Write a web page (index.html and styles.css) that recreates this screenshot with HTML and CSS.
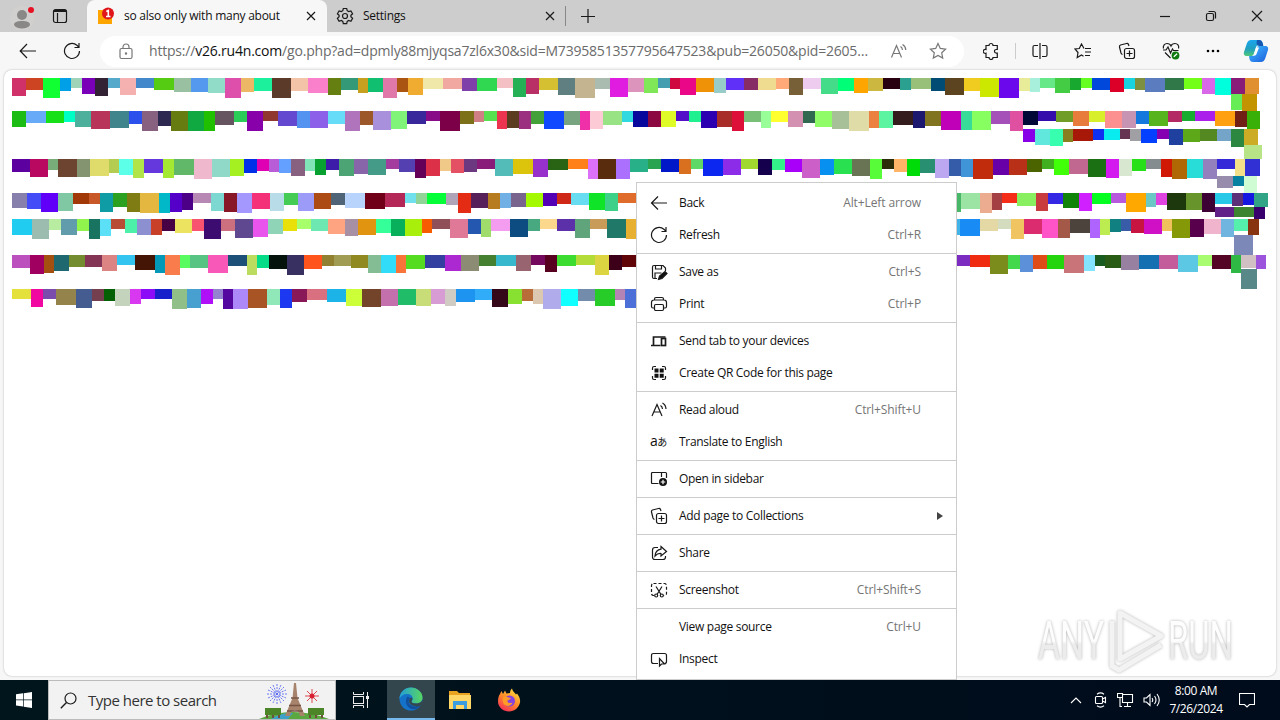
FILE: index.html
```html
<!DOCTYPE html>
<html lang="en">
<head>
  <meta charset="UTF-8">
  <meta name="viewport" content="width=device-width, initial-scale=1.0">
  <title>so also only with many about</title>
  <link rel="stylesheet" href="styles.css">
</head>
<body>
  <header class="tab-strip">
    <svg class="profile" width="26" height="28" viewBox="0 0 26 28">
      <circle cx="13" cy="16" r="12" fill="#d2d0ce"/>
      <circle cx="13" cy="13" r="5" fill="#8a8886"/>
      <path d="M5 23c0-3 3-4 8-4s8 1 8 4c-1 2-4 3.500-8 3.500S6 25 5 23z" fill="#8a8886"/>
      <circle cx="22" cy="8" r="3" fill="#e81123"/>
    </svg>
    <svg class="workspaces icon" width="16" height="16" viewBox="0 0 16 16"><rect x="1.500" y="1.500" width="13" height="13" rx="2"/><path d="M1.500 3.500h13M2 2.500h12M5.500 5v9.500"/></svg>
    <div class="tab active">
      <svg class="favicon" width="18" height="18" viewBox="0 0 18 18">
        <path d="M1 3h14v14H1z" fill="#ffa500"/>
        <circle cx="11" cy="6.500" r="6" fill="#e0161b"/>
        <path d="M9.300 4.500l2-1v6M9 9.500h4.500" fill="none" stroke="#fff" stroke-width="1.600"/>
      </svg>
      <span class="tab-title">so also only with many about</span>
      <svg class="icon" width="10" height="10" viewBox="0 0 10 10"><path d="M1 1l8 8M9 1l-8 8"/></svg>
    </div>
    <div class="tab">
      <svg class="icon gear" width="18" height="18" viewBox="0 0 18 18"><path d="M7.300 1.500h3.400l.5 2.200 1.500.9 2.200-.7 1.700 2.900-1.700 1.500v1.500l1.700 1.500-1.700 2.900-2.200-.7-1.500.9-.5 2.200H7.300l-.5-2.200-1.500-.9-2.200.7-1.700-2.900 1.700-1.500V8.300L1.400 6.800l1.700-2.900 2.200.7 1.500-.9z"/><circle cx="9" cy="9" r="2.500"/></svg>
      <span class="tab-title">Settings</span>
      <svg class="icon" width="10" height="10" viewBox="0 0 10 10"><path d="M1 1l8 8M9 1l-8 8"/></svg>
    </div>
    <svg class="new-tab icon" width="14" height="14" viewBox="0 0 14 14"><path d="M7 0v14M0 7.500h14"/></svg>
    <div class="window-buttons">
      <svg class="icon" width="12" height="12" viewBox="0 0 12 12"><path d="M1 6.500h10"/></svg>
      <svg class="icon" width="12" height="12" viewBox="0 0 12 12"><rect x="1.500" y="3.500" width="7" height="7" rx="1.500"/><path d="M3.500 1.500h5q2 0 2 2v5"/></svg>
      <svg class="icon" width="12" height="12" viewBox="0 0 12 12"><path d="M1 1l10 10M11 1L1 11"/></svg>
    </div>
  </header>

  <nav class="toolbar">
    <svg class="icon" width="18" height="16" viewBox="0 0 18 16"><path d="M17 8H1.500M8 1L1.200 8 8 15"/></svg>
    <svg class="icon reload" width="18" height="18" viewBox="0 0 18 18"><path d="M16.500 9a7.500 7.500 0 1 1-2.600-5.700L16 5.200M16 1v4.500h-4.500"/></svg>
    <div class="address-bar">
      <svg class="icon gray" width="14" height="17" viewBox="0 0 14 17"><rect x="1" y="5.500" width="12" height="10" rx="1.500"/><path d="M4 5.500V4a3 3 0 0 1 6 0v1.500"/><circle cx="7" cy="10.500" r=".6"/></svg>
      <span class="url">https://<b>v26.ru4n.com</b>/go.php?ad=dpmly88mjyqsa7zl6x30&amp;sid=M7395851357795647523&amp;pub=26050&amp;pid=2605…</span>
      <svg class="icon gray read" width="18" height="16" viewBox="0 0 18 16"><path d="M1.500 14.500L6.500 2.500l5 12M3.300 10.500h6.400M10.500 3.500q1.800 1 2 3.500M12.500 1.500q3.200 1.800 3.300 5.500"/></svg>
      <svg class="icon gray" width="18" height="18" viewBox="0 0 18 18"><path d="M9 1.500l2.300 4.900 5.300.7-3.900 3.700 1 5.300L9 13.500l-4.700 2.600 1-5.300L1.400 7.100l5.300-.7z"/></svg>
    </div>
    <div class="actions">
      <svg class="icon" width="16" height="18" viewBox="0 0 16 18"><path d="M3 3.500h3a2 2 0 1 1 4 0h4.300v4h-1a1.800 1.800 0 1 0 0 3.700h1v4.300H10a2 2 0 0 1-4 0H3v-4.300a2 2 0 1 1 0-3.700z"/></svg>
      <i class="divider"></i>
      <svg class="icon" width="16" height="16" viewBox="0 0 16 16"><path d="M8 0v16M6 2.500H2.500q-1.500 0-1.500 1.500v8q0 1.500 1.500 1.500H6M10 2.500h3.500q1.500 0 1.500 1.500v8q0 1.500-1.500 1.500H10"/></svg>
      <svg class="icon" width="18" height="16" viewBox="0 0 18 16"><path d="M10 5.500L7.500 1 5.300 5.500 1 6l3 3.500-.8 5L7.500 12l2 1.200M11 5.500h6M11 9h6M11 12.500h5"/></svg>
      <svg class="icon" width="18" height="18" viewBox="0 0 18 18"><use href="#collections"/></svg>
      <svg class="icon" width="18" height="18" viewBox="0 0 18 18"><path d="M1.500 6.500C.5 3.500 3 1.500 5 1.500c2 0 3.500 1.300 4 2.500.5-1.200 2-2.500 4-2.500 2.300 0 4.500 2 3.500 5M1 8h3l2-3 2.500 6L10.500 7l1 1.500h5M3 10.500l5.500 5.500"/><circle cx="13.500" cy="13.500" r="3.900" fill="#107c10" stroke="none"/><path d="M11.800 14.800l3.300-3" stroke="#fff"/></svg>
      <svg width="14" height="4" viewBox="0 0 14 4"><circle cx="2" cy="2" r="1.300"/><circle cx="7" cy="2" r="1.300"/><circle cx="12" cy="2" r="1.300"/></svg>
      <svg class="copilot" width="26" height="24" viewBox="0 0 26 24">
        <defs>
          <linearGradient id="cp1" x1="0" y1="0" x2="0" y2="1"><stop offset="0" stop-color="#1aa6ee"/><stop offset=".55" stop-color="#1f9fc0"/><stop offset="1" stop-color="#4fc878"/></linearGradient>
          <linearGradient id="cp2" x1="0" y1="0" x2="1" y2="1"><stop offset="0" stop-color="#2fc4f4"/><stop offset=".5" stop-color="#2f8cf0"/><stop offset="1" stop-color="#1a5cd8"/></linearGradient>
        </defs>
        <path d="M8 1h8c2 0 3 1 3.600 3l.6 2h-4c-2 0-3 1-3.500 3l-2 6c-.5 1.500-1.500 2-3 2H4c-3 0-3.500-2-3-4l3-9C5 2 6 1 8 1z" fill="url(#cp1)"/>
        <path d="M14 1h2c2 0 3 1 3.600 3l.8 3h-4c-2 0-2.400-1-2.900-3z" fill="#1558b4"/>
        <path d="M18 23h-8c-2 0-3-1-3.500-3L6 17h2.500c2 0 3-1 3.500-3l2-5c.5-2 1.500-2 3-2h5c3 0 3.500 2 3 4l-3 9c-1 2-2 3-4 3z" fill="url(#cp2)"/>
        <path d="M13 8.500h3l-2.500 6.500c-.5 1.300-1 1.700-2.500 1.700H9.500c1-.5 1.500-1.200 2-2.700z" fill="#fff"/>
      </svg>
    </div>
  </nav>

  <main class="page" id="page"></main>

  <svg class="watermark" width="210" height="72" viewBox="0 0 210 72">
    <defs><linearGradient id="wm" x1="0" y1="0" x2="0" y2="1"><stop offset=".5" stop-color="#fdfdfd"/><stop offset=".55" stop-color="#ececec"/></linearGradient></defs>
    <g fill="url(#wm)">
      <text x="6" y="55" textLength="66" lengthAdjust="spacingAndGlyphs">ANY</text>
      <text x="136" y="55" textLength="65" lengthAdjust="spacingAndGlyphs">RUN</text>
    </g>
    <path d="M88 9v46l41-23zM80 17v45l7 4 42-25" fill="none" stroke="#f3f3f3" stroke-width="5" stroke-linejoin="round"/>
  </svg>

  <div class="context-menu">
    <div class="item"><svg class="icon" width="18" height="18" viewBox="0 0 18 18"><path d="M17 9H2M8 2.500L1.500 9 8 15.500"/></svg><span>Back</span><kbd>Alt+Left arrow</kbd></div>
    <div class="item"><svg class="icon" width="18" height="18" viewBox="0 0 18 18"><path d="M16.500 9a7.500 7.500 0 1 1-2.600-5.700L16 5.200M16 1v4.500h-4.500"/></svg><span>Refresh</span><kbd>Ctrl+R</kbd></div>
    <hr>
    <div class="item"><svg class="icon" width="18" height="18" viewBox="0 0 18 18"><path d="M7 15.500H4q-1.500 0-1.500-1.500V4Q2.500 2.500 4 2.500h9L15.500 5v3M5.500 2.500v3.500h6V2.500M5 15V10h6.500"/><path d="M8.500 16.500l1-3.500 5.500-4.500 2 2-5 5z" fill="#111"/></svg><span>Save as</span><kbd>Ctrl+S</kbd></div>
    <div class="item"><svg class="icon" width="18" height="18" viewBox="0 0 18 18"><path d="M4.500 13H3q-1.500 0-1.500-1.500V7.500Q1.500 5 4 5h10q2.500 0 2.500 2.500v4q0 1.500-1.500 1.500h-1.500M4.500 5V4q0-1.500 1.500-1.500h6q1.500 0 1.500 1.500v1"/><rect x="4.500" y="9.500" width="9" height="6" rx="1.200"/></svg><span>Print</span><kbd>Ctrl+P</kbd></div>
    <hr>
    <div class="item"><svg class="icon bold" width="18" height="18" viewBox="0 0 18 18"><path d="M3.500 13V5h12M1 13.500h9.500"/><rect x="11.500" y="6.500" width="4" height="7"/></svg><span>Send tab to your devices</span></div>
    <div class="item"><svg class="icon" width="18" height="18" viewBox="0 0 18 18"><path d="M2.500 6V4q0-1.500 1.500-1.500h2M12 2.500h2q1.500 0 1.500 1.500v2M15.500 12v2q0 1.500-1.500 1.500h-2M6 15.500H4q-1.500 0-1.500-1.500v-2"/><path d="M4.500 4.500h4v4h-4zM9.700 4.500h4v4h-4zM4.500 9.700h4v4h-4zM9.700 9.700h4v4h-4z" fill="#111" stroke="none"/></svg><span>Create QR Code for this page</span></div>
    <hr>
    <div class="item"><svg class="icon" width="18" height="18" viewBox="0 0 18 18"><path d="M2 15L7 3.500 12 15M3.800 11h6.500M10.500 4.500q1.800 1 2 3.500M12.500 2q3.300 1.800 3.500 6"/></svg><span>Read aloud</span><kbd>Ctrl+Shift+U</kbd></div>
    <div class="item"><span class="glyph">a<small>あ</small></span><span>Translate to English</span></div>
    <hr>
    <div class="item"><svg class="icon" width="18" height="18" viewBox="0 0 18 18"><path d="M8.500 13.500h-6q-1 0-1-1v-9q0-1 1-1h13q1 0 1 1V8M11.500 3v4"/><circle cx="13" cy="12" r="4" fill="#111" stroke="none"/><path d="M13 9.700v4.600M10.700 12h4.600" stroke="#fff"/></svg><span>Open in sidebar</span></div>
    <hr>
    <div class="item"><svg class="icon" width="18" height="18" viewBox="0 0 18 18"><g id="collections"><rect x="6.500" y="6.500" width="10" height="10" rx="2"/><path d="M11.500 8.500v6M8.500 11.500h6M4.500 12.500Q3.300 12 3 11L1.500 5Q1.200 3.500 2.500 3l6-1.500q1.500-.3 2 1l.5 1.500"/></g></svg><span>Add page to Collections</span><i class="arrow"></i></div>
    <hr>
    <div class="item"><svg class="icon" width="18" height="18" viewBox="0 0 18 18"><path d="M8 3.500H5Q2.500 3.500 2.500 6v7q0 2.500 2.500 2.500h8q2.500 0 2.500-2.500v-1"/><path d="M11 2.500l5.500 5-5.500 4.500V9.500q-3.500-.3-6 2.500Q5.500 6 11 5.200z"/></svg><span>Share</span></div>
    <hr>
    <div class="item"><svg class="icon" width="18" height="18" viewBox="0 0 18 18"><rect x="1.500" y="2.500" width="15" height="12" rx="2" stroke-dasharray="3 2"/><path d="M4.500 11h9v6h-9z" fill="#fff" stroke="none"/><path d="M6 5.500l5 8M12 5.500l-5 8"/><circle cx="6.200" cy="14.500" r="1.500"/><circle cx="11.800" cy="14.500" r="1.500"/></svg><span>Screenshot</span><kbd>Ctrl+Shift+S</kbd></div>
    <hr>
    <div class="item"><i class="blank"></i><span>View page source</span><kbd>Ctrl+U</kbd></div>
    <div class="item"><svg class="icon" width="18" height="18" viewBox="0 0 18 18"><path d="M8 13.500H3.500q-2 0-2-2V5.500q0-2 2-2h11q2 0 2 2v6q0 2-2 2"/><path d="M9.500 8.500v7.500l2-2h3z"/></svg><span>Inspect</span></div>
  </div>

  <footer class="taskbar">
    <div class="start"><svg width="16" height="16" viewBox="0 0 16 16" fill="#fff"><path d="M0 2.300L7 1.300V7.600H0zM7.700 1.200L16 0v7.600H7.700zM0 8.300h7v6.300l-7-1zM7.700 8.300H16V16l-8.300-1.200z"/></svg></div>
    <div class="search">
      <svg class="icon" width="17" height="17" viewBox="0 0 17 17"><circle cx="10.500" cy="6.500" r="5.500"/><path d="M6.500 10.500L.8 16.300" stroke-width="1.400"/></svg>
      <span>Type here to search</span>
      <svg class="paris" width="80" height="38" viewBox="0 0 80 38">
        <g stroke="#5c6cf0" stroke-width=".9"><path d="M22 3v20M12 13h20M15 6l14 14M29 6L15 20M18 4l8 18M26 4l-8 18M13 9l18 8M13 17l18-8" stroke-dasharray="2 1"/></g>
        <path d="M57 8v14M50 15h14M52 10l10 10M62 10L52 20" stroke="#e04850" stroke-width="1"/><circle cx="57" cy="15" r="2.500" fill="#d82030"/>
        <path d="M4 38Q20 31 38 31t36 7z" fill="#5ca840"/><path d="M16 38q10-7 22-6l-5 6z" fill="#3fa0c8"/>
        <path d="M10 27h16v7H10zM53 27h16v7H53z" fill="#4c8428"/><path d="M12 34v3M18 34v3M24 34v3M55 34v3M61 34v3M67 34v3" stroke="#70503c" stroke-width="2"/>
        <path d="M39 2h2l1.500 15L50 35h-5q-1-6-5-6t-5 6h-5l7.500-18z" fill="#a8836c"/><path d="M34 24.500h12M36 17h8M32 30h16" stroke="#765444" stroke-width="1.300"/>
      </svg>
    </div>
    <div class="app task-view"><svg width="18" height="16" viewBox="0 0 18 16" fill="none" stroke="#eee"><path d="M1.500 0v2.500h10V0M1.500 16v-2.500h10V16M15.500 0v16"/><rect x="1.500" y="4.500" width="10" height="7"/><path d="M14 5.500h3" stroke-width="3"/></svg></div>
    <div class="app current"><svg width="24" height="24" viewBox="0 0 24 24">
      <defs><linearGradient id="eg" x1="0" y1="0" x2="1" y2="0"><stop offset="0" stop-color="#229ed8"/><stop offset="1" stop-color="#58d660"/></linearGradient></defs>
      <circle cx="12" cy="12" r="11.500" fill="#1473c8"/>
      <path d="M.5 12C.5 5 6 .5 12 .5S23.500 5 23.500 10.500c0 4-3 6-6.500 6-3 0-4.500-1-4.500-2 0-.8 1.200-1 1.200-3C13.700 9 11.500 7 8 7S1.500 9 .5 12z" fill="url(#eg)"/>
      <path d="M8.500 9.500c-3 4-1.500 9.500 3 12 3 1.500 7.500.5 9.800-3-6 2.500-12 0-11.600-4.500 0-1.500.8-2.500 1.500-3z" fill="#124f9c"/>
      <path d="M12.500 14.500c0 1 1.500 2 4.500 2 3 0 5.500-1.200 6.300-3.500l.2 4-2.500 2C16 20.500 10 18 10 14c0-1.500.8-3 2.500-3.500 2 1.500 0 3 0 4z" fill="#344850"/>
    </svg></div>
    <div class="app"><svg width="22" height="20" viewBox="0 0 22 20"><path d="M0 1h8l2 2h11v4H0z" fill="#e8a420"/><path d="M0 5h22v14H0z" fill="#ffd766"/><path d="M4 19v-8h14v8h-3v-4H7v4z" fill="#3c9ce0"/></svg></div>
    <div class="app"><svg width="24" height="24" viewBox="0 0 24 24">
      <defs><linearGradient id="fx" x1=".8" y1="0" x2=".2" y2="1"><stop offset="0" stop-color="#ffe040"/><stop offset=".5" stop-color="#ff8a28"/><stop offset="1" stop-color="#f4285c"/></linearGradient></defs>
      <path d="M3 6l1.500-3L6 6l2-3.500 1.500 3L13 5c0-2 1-4 2-4.500.5 3 3 4 4 6l1-1c2.500 3 3.500 6 3 9-1 5-5.500 9-11 9S1 19.500 1 13.500C1 10.500 1.500 8 3 6z" fill="url(#fx)"/>
      <circle cx="12.500" cy="13" r="5.500" fill="#8442e0"/><path d="M6 9c2-1 4-.5 5 .5 2 0 3 .5 2.500 1.500l-3 1.500c-.5 2 2 3.500 5 2-1 3-4 4-6.500 3C6 16.500 5 12.500 6 9z" fill="#ff9c28"/>
    </svg></div>
    <div class="tray">
      <svg width="12" height="8" viewBox="0 0 12 8"><path d="M1 7l5-5 5 5"/></svg>
      <svg width="14" height="16" viewBox="0 0 14 16"><rect x="1.500" y="4.500" width="7" height="7" rx="1"/><path d="M8.500 7l3-1.500v5L8.500 9M3 2.200Q6.500-.5 10 2.200M3 13.800q3.500 2.700 7 0"/></svg>
      <svg width="17" height="16" viewBox="0 0 17 16"><path d="M5.500 2.500h10v8h-10zM7 14.500h7M10.500 11v3M.5 1.500h5v4h-5zM3 5.500v9h2"/></svg>
      <svg width="18" height="14" viewBox="0 0 18 14"><path d="M1 5h2.500L7 1.500v11L3.500 9H1zM9 5q1.500 2 0 4M11.500 3q3 4 0 8M14 1q4.500 6 0 12"/></svg>
      <div class="clock"><span>8:00 AM</span><span>7/26/2024</span></div>
      <svg class="action-center" width="16" height="16" viewBox="0 0 16 16"><path d="M.5 1.500h15v11h-5L8 15l-2.500-2.500h-5z"/></svg>
    </div>
  </footer>

  <script>
    // one string per row, every block is "width height color"
    const rows = [
      '14 18 cf3168,17 12 cc4422,17 20 0fff33,11 13 00a0e8,11 10 a0d4b8,13 16 7a00b8,13 18 332233,12 10 55aacc,16 17 f5b0b0,18 10 4488cc,20 12 55cc11,17 14 99c0a0,17 14 5599ee,17 15 90dcc8,16 20 dd4faa,13 14 ecb866,18 13 1cf09c,19 20 5c3a2a,17 13 f4c4a8,20 15 fa80cc,' +
      '13 17 667f11,17 12 339977,10 15 c8a020,15 14 10c070,14 20 e078aa,11 14 aa5511,15 17 f0ac30,20 11 f0e8a8,19 11 f0a8a0,15 13 8040aa,20 13 2fd850,16 10 f4c0c4,13 19 26b055,13 16 b83066,19 12 d4c030,17 17 5f7f80,20 20 c4b490,15 11 aabcb0,18 19 e01ce0,16 14 dc94bc,' +
      '14 15 80e858,12 10 449eb0,10 11 d00840,16 17 ea0888,18 14 f09208,12 15 98ccc8,18 12 6030f8,14 12 882c66,18 12 f0dc90,13 11 ffa878,14 17 775f38,18 11 eeccf0,17 16 44dc88,16 13 00ff77,14 15 ffa500,15 13 ccb840,17 11 280010,11 12 2ca090,20 11 98c078,14 13 004c74,19 17 5c4420,' +
      '16 13 f0cc20,19 19 cce800,20 20 6c08ec,11 13 e8ec98,10 14 a8f0dc,15 10 66e888,15 15 44cc44,11 12 18a830,11 10 66ff22,18 12 0048dc,14 14 dc0028,11 11 18d4e0,10 12 7c9040,20 14 5c7cc0,19 12 307848,18 11 74ff18,13 16 d868e8,16 17 00ffdc,14 16 881c78,14 16 e09030,11 16 66ec54,15 17 c49400',
      '14 16 1cbc14,20 12 66aaf8,18 12 18e018,11 11 00ffc4,16 16 4cb09c,19 18 b83458,19 17 40848c,13 13 2c50ec,16 20 886080,13 15 2c2850,17 20 667c10,16 20 10a840,11 20 20c000,19 14 665460,13 11 2ccc58,16 20 8800aa,15 10 903830,19 15 6448d0,13 17 5494f0,18 17 8c60e8,' +
      '17 13 66dcf8,15 20 b074bc,13 14 9c5828,18 19 a890dc,16 18 80f478,19 13 38289c,14 10 880c88,20 20 7c0048,14 13 7c7018,10 11 d08084,13 10 58e050,10 18 ec3450,12 17 5c3c20,12 18 9c3080,13 13 44a038,20 18 1048ff,16 14 78a480,10 19 f030a8,13 18 fccad4,19 14 98e484,11 11 30d8e0,15 16 08089c,' +
      '13 16 8c0840,15 16 e0fc28,13 10 5410c8,12 11 20f090,16 17 2c00b0,15 16 a82c28,12 20 dc1038,17 11 78c078,10 17 98ff98,17 11 ffff30,15 16 d490b0,12 12 306850,17 16 90fc68,17 18 a8c098,20 20 e0dca8,10 17 ec8040,14 17 5cf4a0,20 14 341c1c,12 17 1c1870,16 15 807420,20 19 c000b8,' +
      '11 19 38dc98,19 19 88ff60,19 13 a450b8,13 20 e050a0,15 14 000838,18 10 340cac,17 11 709c28,16 15 e87c3c,16 11 d8f02c,17 17 fc9090,14 17 c894b4,13 13 1478dc,19 15 58b41c,14 11 b42864,13 10 18ac30,20 10 ac20ec,20 15 ffa010,12 16 702014,13 18 38b008,' +
      '12 13 8800e8,15 16 60e8dc,13 17 38ffb0,10 13 888020,20 12 a81808,11 11 1030f0,16 11 08ecf0,10 10 643450,11 12 a0a0a4,16 14 0440ff,12 10 8400b0,14 16 2040a0,17 13 5ca818,17 12 548820,14 12 74a4c8,13 18 2c8840,14 16 ccac24,18 14 b8e488',
      '18 13 5c00a0,18 18 b80860,10 11 78ac78,19 18 6c4430,13 18 849470,19 17 e0dc6c,10 14 b4cc50,14 16 5cffe8,11 19 b0e448,19 14 6438dc,11 19 a4e834,20 16 60b868,18 20 f0b8cc,18 18 90d8c8,14 17 a4f020,13 14 0030e8,12 12 e000b4,10 13 b85cd8,12 14 64a0ff,14 17 886080,10 12 80e4b8,11 16 08a030,' +
      '13 11 3c1ca8,15 17 4ca474,14 15 8864a8,18 16 449c88,13 10 a43ca0,16 13 5440b0,11 19 640058,14 17 dc3048,11 12 f0c888,13 14 e45064,13 13 6c3880,18 10 881c78,18 17 54bcb8,20 15 dcc40c,15 18 9830cc,20 11 286414,20 10 ff8018,10 20 dc70f8,18 20 582c0c,14 20 ac70ff,18 13 28b088,' +
      '13 10 28a450,18 13 0018c8,12 15 d87020,12 10 60d868,20 17 0c28f0,18 16 8c2ce8,17 10 a0d830,14 16 14004c,13 11 34f088,17 13 a800f8,18 19 cc60c8,14 16 0890f0,18 15 28e050,18 17 687454,12 20 58fc38,12 10 2c2c08,13 13 ffb468,13 17 00dc08,15 14 289070,14 19 bca8f0,12 17 345ca8,' +
      '12 18 4094d8,20 20 c02c0c,16 16 6800a8,18 16 b83018,15 13 4c6400,12 10 40b020,15 16 40ff08,19 15 c06890,18 18 1c7014,13 19 d418f0,13 17 d8e8d0,14 12 28e018,15 10 848c90,11 18 d01804,15 20 b06804,16 19 28dcd8,14 20 9480bc,18 10 3428d8,10 17 f4e088,15 17 3030d4,16 12 988cac,11 10 0880a0,13 17 d0fcd4',
      '15 15 8880ac,14 16 444cf8,17 19 6000f8,15 18 80c8a4,16 11 a03808,11 11 c85828,13 19 109ca4,14 14 2ca020,13 19 7f7c14,19 20 e4b840,11 20 00b8c8,12 19 5400c8,11 17 4c0088,18 10 b888b4,13 18 7cd8d0,13 19 881828,15 20 a498ff,18 16 f43078,14 18 b8dce8,14 12 44cc54,16 18 9c9cf8,17 16 ac4c14,' +
      '14 12 506478,20 15 b8d4fc,20 16 700018,20 14 b42858,11 10 70e0ec,11 11 90d498,19 11 04ff38,12 12 b0a4b8,13 20 e42c14,17 15 582058,12 16 b87c20,11 15 70b0e4,15 14 78648c,17 14 a4f800,14 13 5400b4,14 11 d02818,18 12 68dcf0,16 17 10e428,13 18 3cd088,18 10 e06c2c,' +
      '20 12 3c70b8,20 16 c4a030,20 11 70d0a8,20 18 8c2c58,20 10 50e020,20 14 2048d0,20 13 e878c0,20 17 486c40,20 12 b0e0f0,20 15 f06020,20 11 6410a8,20 16 a8b838,20 13 108c94,20 12 d82c48,20 17 7c94f8,10 14 b06c90,15 19 48b868,' +
      '19 16 9ce4a4,12 20 ecac90,10 17 a44044,15 10 f42c18,19 13 88f060,12 18 c83c40,15 11 3428e4,16 15 108408,13 18 d020ff,19 11 04ff20,15 10 b858dc,20 19 ffa800,10 14 6cc8c4,11 12 e044e0,19 17 1c380c,16 17 68942c,13 19 3c0034,17 11 28c8e8,11 13 5c3078,11 12 1418e0,14 14 30a484,19 10 602088,20 10 3c8430,11 12 38006c',
      '20 16 20ccf0,17 20 9cbcb0,12 11 b8eca0,16 16 609cac,12 12 90f44c,11 20 187460,11 17 5ce0f8,14 10 b84c34,12 14 4cf0a8,14 16 8c90d0,11 16 c84028,13 12 480044,17 14 ece460,12 12 f85470,17 20 3c0c70,14 12 cc7080,18 19 604890,15 18 e854ec,15 15 90d4b8,14 12 e8e008,14 10 a8ff6c,17 12 6ce8b0,' +
      '17 15 ffa480,13 17 a890a4,18 16 e09410,15 14 34ff98,14 17 08b05c,17 17 a8f00c,10 14 f85c00,18 10 905058,18 19 e07898,13 15 2458b0,10 18 a0dc6c,19 12 f49cf0,18 18 0c4c80,12 12 48a880,17 10 fcd88c,18 12 5c30a8,15 19 60a47c,17 10 c89c58,19 19 207868,10 20 e8b030,' +
      '20 14 9048e0,20 11 38b45c,20 17 c87820,20 12 2c98d8,20 15 e83c90,20 10 708c18,20 18 5424a0,20 13 f0d048,20 16 10a8a0,20 11 b84830,20 14 88d8f8,20 12 4c5c70,20 17 d468e8,20 10 20e878,14 15 a01844,13 13 f8b078,17 16 40b4e8,' +
      '20 17 188cf4,18 12 e4d8a4,13 10 d4dcc0,13 20 f0c460,18 15 dc2c70,16 19 ff54c8,12 19 a45848,20 14 4c443c,10 19 b064ff,10 16 bcec50,11 13 108080,10 12 385ca8,13 14 c81440,18 15 d010c4,10 12 f0c05c,18 19 849808,14 18 58004c,17 15 f0b4cc,13 18 70b4e0,14 12 54f0ac,11 16 883410,19 20 7c88b8',
      '18 13 bc50bc,14 19 a00060,10 18 a45010,15 16 206870,16 12 748c30,17 12 843454,15 16 dc8484,18 10 34c4f0,20 15 441404,10 18 0498b8,15 20 f87c4c,10 13 58fc60,18 13 58c484,20 18 f858b8,19 11 1c5078,10 20 bcdc60,12 13 04dc88,18 14 04140c,17 20 383060,18 14 ff541c,' +
      '12 11 908030,17 11 a09c54,17 13 908820,13 18 84bc94,15 18 30dcf8,10 18 f87438,19 14 54dc20,20 13 3440a0,16 16 ac28d0,18 16 8c8c74,17 11 448030,20 11 38b8cc,15 16 986470,14 10 74085c,12 17 580020,19 11 3cdc30,19 10 b4dc38,14 20 dcd440,13 15 3c0018,14 12 600408,' +
      '20 13 30c0a8,20 16 d85818,20 11 6830e0,20 14 a4e048,20 18 184884,20 12 f09cb0,20 15 509c20,20 10 c018a8,20 17 88a8d0,20 13 e8b810,20 11 3c1860,20 16 60f0c0,20 14 b03448,20 12 1c80f0,17 15 d4c89c,17 13 447c58,20 11 7c2cc0,' +
      '20 12 f02c10,18 19 7c8c1c,12 14 44d84c,13 17 5c90d8,14 14 e04c18,17 14 24d40c,20 18 c87478,11 16 84e4ff,10 11 185c20,16 13 285c14,18 15 9880a0,20 14 1470b0,19 14 c45c9c,20 17 5cc8e4,14 11 a8fc70,19 14 540424,10 18 30b844,15 13 d0c0c4,10 14 9c54dc,16 20 588888',
      '19 10 e4e03c,12 18 f008a0,13 10 7c4cac,20 16 94844c,16 19 445c90,12 12 744050,11 12 046004,15 17 c4d4bc,11 15 d838f0,14 10 8c0cf8,17 10 1820cc,15 20 90c088,14 19 48a0d0,12 15 b010f8,10 10 9484d0,10 20 5408a0,15 20 ac88f8,19 19 a85424,13 16 90e8b8,12 19 1c38f0,15 13 881858,20 11 d87080,' +
      '19 13 1cb4e8,16 17 ccff38,19 18 74442a,17 17 c470ac,18 16 20bc68,15 17 c8dc78,14 15 d89cd4,11 17 d0ccc4,19 13 1c94f0,17 11 30acf8,16 18 340818,14 15 88e030,11 12 b86c38,10 15 dcc8b0,18 20 b0acec,17 17 10ffff,17 12 748cac,20 17 28cc28,10 11 b484b4,12 19 4c70d8'
    ];

    const page = document.getElementById('page');
    rows.forEach(row => {
      const line = document.createElement('div');
      line.className = 'blocks';
      row.split(',').forEach(item => {
        const [w, h, color] = item.split(' ');
        const block = document.createElement('div');
        block.className = 'block';
        block.style.width = w + 'px';
        block.style.height = h + 'px';
        block.style.backgroundColor = '#' + color;
        line.appendChild(block);
      });
      page.appendChild(line);
    });
  </script>
</body>
</html>
```
FILE: styles.css
```css
* { box-sizing: border-box; }
html, body { margin: 0; padding: 0; }
body {
  width: 1280px; height: 720px;
  display: flex;
  flex-direction: column;
  position: relative;
  overflow: hidden;
  background: #f7f7f7;
  color: #111;
  font-family: "Open Sans", "Noto Sans", "Noto Sans CJK JP", sans-serif;
  font-size: 12px;
}
svg { flex: none; display: block; }
.icon {
  fill: none;
  stroke: #1a1a1a;
  stroke-width: 1.2;
}
.icon.gray { stroke: #777; }
.icon.bold { stroke-width: 1.7; }

/* tabs */
.tab-strip {
  height: 32px;
  flex: none;
  display: flex;
  align-items: center;
  background: #cdcdcd;
}
.profile { margin-left: 9px; }
.workspaces { margin: 0 19px 0 17px; }
.tab {
  width: 239px; height: 32px;
  padding: 0 11px 0 9px;
  display: flex;
  align-items: center;
  gap: 9px;
}
.tab.active {
  width: 240px;
  padding: 0 11px 0 10px;
  background: #f7f7f7;
  border-radius: 8px 8px 0 0;
}
.tab:not(.active) { position: relative; }
.tab:not(.active)::after {
  content: "";
  position: absolute;
  right: 0; top: 6px;
  width: 1px; height: 20px;
  background: #888;
}
.tab-title {
  flex: 1;
  padding-bottom: 1px;
  white-space: nowrap;
  letter-spacing: -0.25px;
}
.new-tab { margin-left: 15px; }
.window-buttons {
  margin-left: auto;
  margin-right: 17px;
  display: flex;
  gap: 34px;
}

/* address row */
.toolbar {
  height: 38px;
  flex: none;
  display: flex;
  align-items: center;
  padding-left: 19px;
}
.reload { margin: 0 19px 0 26px; }
.address-bar {
  width: 864px; height: 31px;
  padding: 0 17px 0 19px;
  display: flex;
  align-items: center;
  background: #fff;
  border-radius: 16px;
}
.url {
  flex: 1;
  margin-left: 16px;
  padding-bottom: 1px;
  font-size: 14px;
  color: #6b6b6b;
  letter-spacing: -0.2px;
  white-space: nowrap;
}
.url b { font-weight: normal; color: #111; }
.read { margin-right: 21px; }
.actions {
  display: flex;
  align-items: center;
  gap: 26px;
  padding-left: 19px;
}
.divider {
  width: 1px; height: 16px;
  margin: 0 -10px;
  background: #ccc;
}
.copilot { margin-left: -3px; }

/* page content */
.page {
  flex: 1;
  margin: 0 4px 4px;
  padding: 8px;
  background: #fff;
  border-radius: 8px;
  box-shadow: 0 0 2px rgba(0,0,0,0.3);
}
.blocks { display: flow-root; }
.block { float: left; }
.watermark {
  position: absolute;
  left: 1032px; top: 604px;
  overflow: visible;
  font-family: "Roboto", sans-serif;
  font-size: 53px;
  filter: drop-shadow(0 0 1.5px rgba(0,0,0,0.3));
}

/* right click menu */
.context-menu {
  position: absolute;
  left: 636px; top: 182px;
  width: 321px;
  padding: 4px 0;
  background: #fff;
  border: 1px solid #ccc;
}
.item {
  height: 32px;
  padding: 0 35px 0 13px;
  display: flex;
  align-items: center;
  gap: 11px;
  white-space: nowrap;
}
.item span {
  flex: 1;
  padding-bottom: 1px;
  letter-spacing: -0.3px;
}
.item kbd {
  padding-bottom: 1px;
  font: inherit;
  color: #757575;
  letter-spacing: -0.1px;
}
.item .glyph {
  flex: none;
  width: 18px;
  padding-bottom: 3px;
  font-size: 14px;
  letter-spacing: -0.5px;
}
.glyph small { font-size: 10px; }
.blank { width: 18px; }
.arrow {
  margin-right: -22px;
  border-left: 6px solid #444;
  border-top: 4px solid transparent;
  border-bottom: 4px solid transparent;
}
.context-menu hr {
  height: 1px;
  margin: 2px 0;
  border: 0;
  background: #ccc;
}

/* taskbar */
.taskbar {
  height: 40px;
  flex: none;
  display: flex;
  background: linear-gradient(90deg, #00151c, #000b1c);
}
.start, .app {
  width: 49px;
  flex: none;
  display: flex;
  align-items: center;
  justify-content: center;
}
.start { width: 48px; }
.search {
  width: 288px;
  flex: none;
  padding-left: 11px;
  display: flex;
  align-items: center;
  background: #f2f2f2;
  border: 1px solid #bbb;
  overflow: hidden;
}
.search span {
  flex: 1;
  margin-left: 11px;
  font-size: 15px;
  color: #333;
  letter-spacing: -0.5px;
  white-space: nowrap;
}
.app.task-view { width: 51px; padding-right: 2px; }
.app.current {
  width: 48px;
  background: #33464e;
  border-bottom: 2px solid #76b9ed;
}
.tray {
  margin-left: auto;
  margin-right: 25px;
  display: flex;
  align-items: center;
  gap: 9px;
  color: #fff;
}
.tray svg { fill: none; stroke: #fff; stroke-width: 1.1; }
.tray svg:first-child { margin-right: 3px; }
.clock {
  width: 52px;
  display: flex;
  flex-direction: column;
  align-items: center;
  line-height: 18px;
  letter-spacing: -0.4px;
}
.tray .action-center { margin-left: 8px; }
```
